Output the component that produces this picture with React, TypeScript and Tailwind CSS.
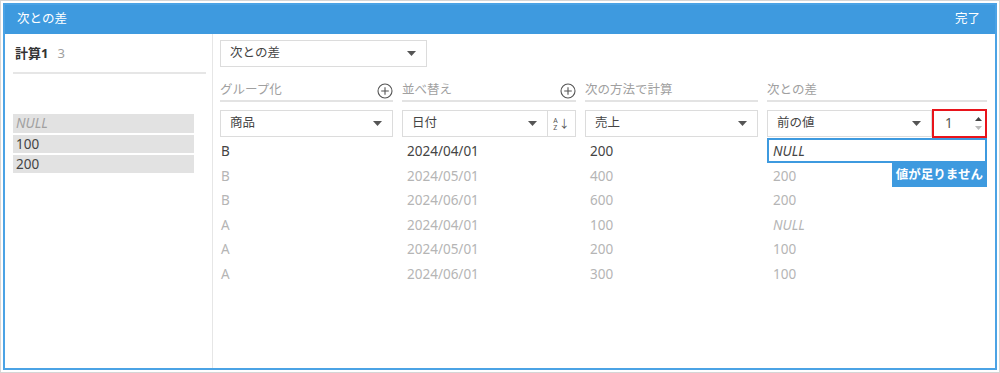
import React from "react";

const font = "font-['Noto_Sans','Noto_Sans_CJK_JP',sans-serif]";

function Caret({ className = "" }: { className?: string }) {
  return (
    <svg width="9" height="5" viewBox="0 0 9 5" className={className}>
      <path d="M0 0h9L4.5 5z" fill="#555" />
    </svg>
  );
}

function CirclePlus() {
  return (
    <svg width="16" height="16" viewBox="0 0 16 16">
      <circle cx="8" cy="8" r="7" fill="none" stroke="#555" strokeWidth="1.1" />
      <path d="M8 4.2v7.6M4.2 8h7.6" stroke="#555" strokeWidth="1.1" />
    </svg>
  );
}

function Select({ label, className = "" }: { label: string; className?: string }) {
  return (
    <div className={`flex h-[27px] items-center justify-between border border-[#dcdcdc] bg-white pl-[9px] pr-[10px] text-[12.5px] text-[#444] ${className}`}>
      <span>{label}</span>
      <Caret />
    </div>
  );
}

function ColHead({ label, plus }: { label: string; plus?: boolean }) {
  return (
    <div className="flex h-[22px] items-center justify-between border-b-2 border-[#e3e3e3] pt-[1px] text-[12.5px] text-[#a0a0a0]">
      <span>{label}</span>
      {plus && <CirclePlus />}
    </div>
  );
}

const rows = [
  { g: "B", d: "2024/04/01", v: "200", diff: "NULL" },
  { g: "B", d: "2024/05/01", v: "400", diff: "200" },
  { g: "B", d: "2024/06/01", v: "600", diff: "200" },
  { g: "A", d: "2024/04/01", v: "100", diff: "NULL" },
  { g: "A", d: "2024/05/01", v: "200", diff: "100" },
  { g: "A", d: "2024/06/01", v: "300", diff: "100" },
];

export default function App() {
  return (
    <div className={`h-[373px] w-[1000px] border border-[#d6d6d6] bg-white p-[2px] ${font}`}>
      <div className="flex h-full flex-col border-2 border-[#4ba3e5]">
        <div className="flex h-[29px] shrink-0 items-center justify-between bg-[#3e9adf] pl-[12px] pr-[15px] text-[12.5px] text-white">
          <span>次との差</span>
          <span>完了</span>
        </div>

        <div className="flex min-h-0 flex-1">
          {/* left: field values */}
          <div className="w-[208px] shrink-0 border-r border-[#e6e6e6] pl-[8px] pr-[6px]">
            <div className="flex h-[40px] items-center gap-[9px] border-b-2 border-[#e6e6e6] pl-[2px] pt-[2px] text-[13px]">
              <span className="font-bold text-[#333]">計算1</span>
              <span className="text-[#a0a0a0]">3</span>
            </div>
            <div className="mt-[40px] flex w-[181px] flex-col gap-[2px] text-[13.5px]">
              <div className="flex h-[19px] items-center bg-[#e2e2e2] pl-[3px] italic text-[#a0a0a0]">NULL</div>
              <div className="flex h-[18px] items-center bg-[#e2e2e2] pl-[3px] text-[#444]">100</div>
              <div className="flex h-[18px] items-center bg-[#e2e2e2] pl-[3px] text-[#444]">200</div>
            </div>
          </div>

          {/* right: table calc settings */}
          <div className="flex-1 pl-[7px] pt-[6px]">
            <Select label="次との差" className="w-[207px]" />

            <div className="mt-[13px] grid grid-cols-[173px_174px_173px_220px] gap-x-[9px]">
              <ColHead label="グループ化" plus />
              <ColHead label="並べ替え" plus />
              <ColHead label="次の方法で計算" />
              <ColHead label="次との差" />
            </div>

            <div className="mt-[8px] grid grid-cols-[173px_174px_173px_220px] gap-x-[9px]">
              <Select label="商品" />
              <div className="flex">
                <Select label="日付" className="flex-1" />
                <div className="flex h-[27px] w-[28px] items-center justify-center gap-[1px] border border-l-0 border-[#dcdcdc] text-[#555]">
                  <span className="flex flex-col text-[7px] leading-[7px]">
                    <span>A</span>
                    <span>Z</span>
                  </span>
                  <span className="text-[11px] leading-none">↓</span>
                </div>
              </div>
              <Select label="売上" />
              <div className="flex">
                <Select label="前の値" className="flex-1" />
                <div className="-my-[1px] flex h-[29px] w-[55px] items-center justify-between border-2 border-[#e8141b] pl-[11px] pr-[3px] text-[13.5px] text-[#555]">
                  <span>1</span>
                  <span className="flex flex-col items-center gap-[5px]">
                    <svg width="7" height="4" viewBox="0 0 7 4"><path d="M0 4h7L3.5 0z" fill="#444" /></svg>
                    <svg width="7" height="4" viewBox="0 0 7 4"><path d="M0 0h7L3.5 4z" fill="#bbb" /></svg>
                  </span>
                </div>
              </div>
            </div>

            <div className="mt-[1px] grid grid-cols-[173px_174px_173px_220px] gap-x-[9px] text-[13.5px]">
              {rows.map((r, i) => {
                const c = i === 0 ? "text-[#444]" : "text-[#b5b5b5]";
                return (
                  <React.Fragment key={i}>
                    <div className={`flex h-[24.5px] items-center pl-[1px] pt-[2px] ${c}`}>{r.g}</div>
                    <div className={`flex h-[24.5px] items-center pl-[5px] pt-[2px] ${c}`}>{r.d}</div>
                    <div className={`flex h-[24.5px] items-center pl-[5px] pt-[2px] ${c}`}>{r.v}</div>
                    {i === 0 ? (
                      <div className="relative flex h-[24.5px] items-center border-2 border-[#3e9adf] pl-[4px] pt-[1px] italic text-[#444]">
                        {r.diff}
                        <div className="absolute right-[-2px] top-[23px] flex h-[24px] items-center bg-[#3e9adf] px-[4px] text-[12.5px] font-bold not-italic text-white">
                          値が足りません
                        </div>
                      </div>
                    ) : (
                      <div className={`flex h-[24.5px] items-center pl-[6px] pt-[2px] ${c} ${r.diff === "NULL" ? "italic" : ""}`}>{r.diff}</div>
                    )}
                  </React.Fragment>
                );
              })}
            </div>
          </div>
        </div>
      </div>
    </div>
  );
}
